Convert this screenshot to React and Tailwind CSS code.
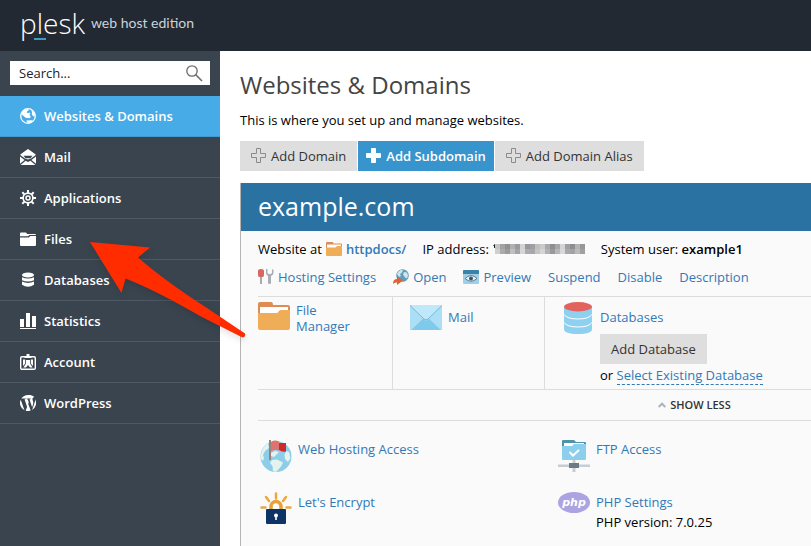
import { useState } from 'react';
import clsx from 'clsx';

const GlobeIcon = () => (
    <svg width="16" height="16" viewBox="0 0 16 16" fill="none">
        <circle cx="8" cy="8" r="7.3" stroke="currentColor" strokeWidth="1.3" />
        <path d="M1 6 2.200 3.600 5 1.600 8 1l.8 1.600-1.600.6-.4 1.600 1.800.2 1-.6.8 1.200-1 1.400 1.400 1.400-1 1.800-4.200-.4-2.600-2.200ZM11.200 1.800l2.600 2.200 1.200 3.400-1.600 1-1.600-2 .2-2.200ZM6.200 12.600l5.400-.4 1.400.4-2.200 2-3 .4Z" fill="currentColor" />
    </svg>
);

const MailIcon = () => (
    <svg width="16" height="16" viewBox="0 0 16 16" fill="currentColor">
        <path d="M8 0 15.500 5.200v1L11 9.600l-3 1-3-1L.5 6.200v-1Z" />
        <path d="M3.500 6.800h9L10.500 9.200h-5Z" fill="#3a444f" />
        <path d="M0 7.500 4.600 11 0 14.800ZM16 7.500 11.400 11 16 14.800ZM.6 16 5.600 11.800 8 13l2.400-1.200 5 4.200Z" />
    </svg>
);

const GearIcon = () => (
    <svg width="16" height="16" viewBox="0 0 16 16" fill="none" stroke="currentColor">
        <circle cx="8" cy="8" r="4.9" strokeWidth="1.7" />
        <circle cx="8" cy="8" r="2" strokeWidth="1.5" />
        <path strokeWidth="2" d="M8 0v3M8 13v3M0 8h3M13 8h3M2.3 2.3l2.1 2.1M11.6 11.6l2.1 2.1M13.7 2.3l-2.1 2.1M4.4 11.6l-2.1 2.1" />
    </svg>
);

const FilesIcon = () => (
    <svg width="16" height="16" viewBox="0 0 16 16" fill="currentColor">
        <path d="M0 2.600Q0 1.600 1 1.600H6L7.200 3H15Q16 3 16 4H9.400L8 5.200H0Z" />
        <path d="M0 6.500H8.800L10.200 5H16V14Q16 15 15 15H1Q0 15 0 14Z" />
    </svg>
);

const StackIcon = () => (
    <svg width="16" height="16" viewBox="0 0 16 16" fill="currentColor">
        <ellipse cx="8" cy="3" rx="6" ry="2.5" />
        <path d="M2 5.200Q8 8 14 5.200V8.200Q8 11 2 8.200ZM2 9.600Q8 12.400 14 9.600V12.800Q8 16.800 2 12.800Z" />
    </svg>
);

const StatsIcon = () => (
    <svg width="16" height="16" viewBox="0 0 16 16" fill="currentColor">
        <path d="M0 6h4v8H0zM6 0h4v14H6zM12 3h4v11h-4zM0 15h16v1H0z" />
    </svg>
);

const AccountIcon = () => (
    <svg width="16" height="16" viewBox="0 0 16 16" fill="none">
        <rect x=".7" y="2.7" width="14.6" height="12.6" rx="1.3" stroke="currentColor" strokeWidth="1.4" />
        <path d="M6.5 0h3v2h2v2h-7V2h2ZM3 5.500h2.200v4L3 12ZM13 5.500h-2.200v4L13 12ZM6 6h4v3.500l2.600 3.900H10L8 11l-2 2.400H3.400L6 9.500Z" fill="currentColor" />
    </svg>
);

const WordPressIcon = () => (
    <svg width="16" height="16" viewBox="0 0 24 24" fill="currentColor">
        <path d="M12 0a12 12 0 0 0-10 5.400h3.500c1.200 0 2.600-.2 2.600-.2.7 0 .8.900.1 1l-1.400.1 4 12.200L13.100 11 11.500 6.300l-1.200-.1c-.6 0-.5-1 .1-1 0 0 1.700.2 2.600.2 1.100 0 2.500-.2 2.500-.2.7 0 .8.900.1 1l-1.400.1 4 12 1.100-3.700c1.700-4.600-.6-6.100-.6-8.200 0-1.900 1.300-3.300 3-3.300A12 12 0 0 0 12 0ZM1.100 7A12 12 0 0 0 6.700 22.800L1.100 7Zm11.100 6L8.600 23.500a12 12 0 0 0 7.500-.2ZM22.600 6.300c.3 2.100-.2 4-.8 5.700l-3.700 10.400A12 12 0 0 0 22.600 6.300Z" />
    </svg>
);

const navItems = [
    { label: 'Websites & Domains', Icon: GlobeIcon },
    { label: 'Mail', Icon: MailIcon },
    { label: 'Applications', Icon: GearIcon },
    { label: 'Files', Icon: FilesIcon },
    { label: 'Databases', Icon: StackIcon },
    { label: 'Statistics', Icon: StatsIcon },
    { label: 'Account', Icon: AccountIcon },
    { label: 'WordPress', Icon: WordPressIcon },
];

const PlusIcon = ({ solid }) => (
    <svg width="16" height="16" viewBox="0 0 16 16" fill={solid ? '#fff' : 'none'} stroke={solid ? '#fff' : '#8b8b8b'}>
        <path d="M5.500.5h4v5h5v4h-5v5h-4v-5h-5v-4h5z" />
    </svg>
);

const FolderIcon = ({ className }) => (
    <svg className={className} viewBox="0 0 32 28">
        <path d="M0 2Q0 0 2 0H13Q15 0 15 3H30Q32 3 32 5V14H0Z" fill="#de8b55" />
        <path d="M2 5H30V14H2Z" fill="#fff" />
        <path d="M0 11H18Q20 11 20.500 9.500T23 8H32V26Q32 28 30 28H2Q0 28 0 26Z" fill="#f0ad58" />
    </svg>
);

const ToolsIcon = () => (
    <svg width="16" height="16" viewBox="0 0 16 16">
        <path d="M0 2Q0 0 3 0t3 2v4q0 2-1.500 2h-3Q0 8 0 6Z" fill="#d8665c" />
        <path d="M2 8h2v7H2z" fill="#a9a9b0" />
        <path d="M8 0v4q0 2 2 3v7q0 1 1.500 1t1.500-1V7q2.500-1 2.500-3V1L14 0v4l-1.500 1h-2L9.500 4V0Z" fill="#a9adb5" />
    </svg>
);

const OpenIcon = () => (
    <svg width="16" height="16" viewBox="0 0 16 16">
        <circle cx="9.500" cy="6.500" r="6.300" fill="#5f9db9" />
        <path d="M5 3 8 .8l2 .8-1 2L7 5l1 2-2 1-2-3ZM11 3l3 .5 1 3-1 3-2-1-2-3Z" fill="#cfe6ef" />
        <path d="M0 15Q0 10 4 10V7l6 4.500L4 16v-2.500Q1.500 13 0 15Z" fill="#e0623a" />
    </svg>
);

const PreviewIcon = () => (
    <svg width="16" height="16" viewBox="0 0 16 16">
        <rect y="1" width="16" height="14" rx="1" fill="#9fcfe6" />
        <path d="M0 2q0-1 1-1h14q1 0 1 1v3H0Z" fill="#3b82a8" />
        <path d="M2 9.500Q8 3.500 14 9.500 8 15 2 9.500Z" fill="#e6f2f7" stroke="#5f8299" />
        <circle cx="8" cy="9.500" r="2" fill="#3d5567" />
    </svg>
);

const EnvelopeIcon = () => (
    <svg width="32" height="25" viewBox="0 0 32 25">
        <rect width="32" height="25" rx="1" fill="#a2dcf5" />
        <path d="M1 25 14 13h4l13 12Z" fill="#7fcaea" />
        <path d="M0 1 13 13 1 25H0ZM32 1 19 13 31 25h1Z" fill="#abdff5" />
        <path d="M0 0h32L18 14.500q-2 1.800-4 0Z" fill="#bfe9fa" />
        <path d="m0 .5 14 13.500q2 1.800 4 0L32 .5" fill="none" stroke="#7db9d4" />
    </svg>
);

const DatabaseIcon = () => (
    <svg width="28" height="32" viewBox="0 0 28 32">
        <path d="M0 4.500h28V27q0 5-14 5T0 27Z" fill="#8ed0ef" />
        <path d="M0 12.500Q3 17 14 17t14-4.500M0 20.500Q3 25 14 25t14-4.500" fill="none" stroke="#fff" />
        <ellipse cx="14" cy="4.700" rx="14" ry="4.700" fill="#e3635c" />
    </svg>
);

const HostingIcon = () => (
    <svg width="32" height="34" viewBox="0 0 32 34">
        <circle cx="16" cy="17.500" r="15.500" fill="#8ecdea" />
        <path d="M8 4 4 8Q0 14 1 20l2 2 1-3-1-3 2-4 4-3ZM11 14l4-2 4 1-3 3-2 2-3-1ZM12 21l5-.5 4 2 2 1-2 4-5 5.500-3-1-.5-5-2.500-3ZM26 12l3 1 1.500 6-2.500 4-3-3-.5-4Z" fill="#e3f3ee" />
        <path d="M11 3q4-2.500 8-.5v9q-4-2-8 1Z" fill="#e07370" />
        <path d="M19 4h7v8.500q-4 1-7-1.500Z" fill="#cc2b2b" />
        <path d="M9 1h2v20H9z" fill="#9a8178" />
    </svg>
);

const EncryptIcon = () => (
    <svg width="32" height="33" viewBox="0 0 32 33" fill="none">
        <path d="M16 1.500v5M6 5l3 4M26 5l-3 4M1.500 15.500h4M26.500 15.500h4" stroke="#eaa83e" strokeWidth="2.500" strokeLinecap="round" />
        <path d="M11 18v-3.500a5 5 0 0 1 10 0V18" stroke="#e5a13a" strokeWidth="3.500" />
        <rect x="6" y="17" width="20" height="15" rx="1" fill="#0e3467" />
        <circle cx="16" cy="23.500" r="2" fill="#fff" />
        <path d="M15.200 24h1.600v4h-1.600z" fill="#fff" />
    </svg>
);

const FtpIcon = () => (
    <svg width="32" height="33" viewBox="0 0 32 33">
        <path d="M4 2q0-1 1-1h11l2 2h9q1 0 1 1v8H4Z" fill="#4d93ac" />
        <path d="M6 4h20v6H6z" fill="#fff" />
        <path d="M4 7h10l2-2h12v15q0 1-1 1H5q-1 0-1-1Z" fill="#8bcfec" />
        <path d="m11.500 13 3.500 3.500L21 11" stroke="#fff" strokeWidth="2" fill="none" />
        <path d="M14.500 21h3v12h-3zM0 25.500h32v2.500H0z" fill="#c6ced3" />
        <rect x="11" y="24" width="10" height="5" fill="#6c7a86" />
    </svg>
);

const PhpIcon = () => (
    <svg width="32" height="21" viewBox="0 0 32 21">
        <ellipse cx="16" cy="10.500" rx="16" ry="10.500" fill="#aca3e2" />
        <text x="16" y="13.500" textAnchor="middle" fill="#fff" fontFamily="DejaVu Sans" fontSize="11" fontStyle="italic" fontWeight="bold">php</text>
    </svg>
);

// hidden IP address, drawn as grey blocks
const mosaic = ['#c4c4c4', '#a2a2a2', '#909094', '#b0b0b0', '#9a9a9e', '#d2d2d2', '#98989a', '#9f9fa3', '#bfbfbf', '#cacaca', '#a8a8a8', '#8e8e92', '#a6a6a6', '#d4d4d4', '#a0a0a4', '#8d8d90', '#b4b4b4', '#979799'];
const HiddenIp = () => (
    <svg width="92" height="12" viewBox="0 0 92 12" role="img" aria-label="hidden">
        <path d="M0 2.500 2 1v4H1V3Z" fill="#222" />
        {mosaic.map((c, i) => (
            <g key={i} fill={c}>
                <rect x={2 + i * 5} y="1" width="5" height="5" />
                <rect x={2 + i * 5} y="6" width="5" height="5" opacity={i % 3 === 0 ? 0.8 : 0.9} />
            </g>
        ))}
    </svg>
);

const Link = ({ className, children }) => (
    <a href="#" className={clsx('text-[#3279b7] hover:underline', className)}>{children}</a>
);

const siteActions = [
    { label: 'Hosting Settings', Icon: ToolsIcon },
    { label: 'Open', Icon: OpenIcon },
    { label: 'Preview', Icon: PreviewIcon },
    { label: 'Suspend' },
    { label: 'Disable' },
    { label: 'Description' },
];

const tools = [
    { label: 'Web Hosting Access', Icon: HostingIcon },
    { label: 'FTP Access', Icon: FtpIcon },
    { label: "Let's Encrypt", Icon: EncryptIcon },
    { label: 'PHP Settings', Icon: PhpIcon, note: 'PHP version: 7.0.25' },
];

export default function App() {
    const [active, setActive] = useState('Websites & Domains');
    const [query, setQuery] = useState('');

    return (
        <div className="relative flex flex-col h-screen overflow-hidden bg-white font-['Open_Sans',sans-serif] text-[13px] leading-5 text-black">
            <header className="flex items-center gap-1.5 h-[51px] shrink-0 pl-5 pb-1.5 bg-[#222933]">
                <span className="relative text-[28px] leading-10 font-light text-white">
                    plesk
                    <span className="absolute left-3.5 bottom-[3px] w-3 h-0.5 bg-[#3b9cc4]" />
                </span>
                <span className="font-[Lato,sans-serif] text-sm text-[#c9d3dc]">web host edition</span>
            </header>

            <div className="flex flex-1 min-h-0">
                {/* Sidebar */}
                <aside className="w-[220px] shrink-0 bg-[#3a444f]">
                    <div className="relative px-2.5 pt-2.5 pb-[11px]">
                        <input
                            type="text"
                            aria-label="Search"
                            placeholder="Search..."
                            value={query}
                            onChange={(e) => setQuery(e.target.value)}
                            className="block w-full h-6 pl-[9px] pr-8 bg-white text-black placeholder:text-[#222] outline-none"
                        />
                        <svg className="absolute right-[17px] top-3.5" width="17" height="17" viewBox="0 0 17 17" fill="none" stroke="#6b6b6b">
                            <circle cx="6" cy="6" r="5.200" strokeWidth="1.300" />
                            <path d="m9.800 9.800 6.200 6.200" strokeWidth="1.600" />
                        </svg>
                    </div>
                    <nav>
                        {navItems.map(({ label, Icon }) => (
                            <a
                                key={label}
                                href="#"
                                onClick={() => setActive(label)}
                                className={clsx(
                                    'flex items-center gap-2 h-[41px] pl-5 border-b font-semibold text-white',
                                    active === label ? 'bg-[#46abe6] border-[#3f9bd0]' : 'border-[#4d5963]'
                                )}
                            >
                                <Icon />
                                {label}
                            </a>
                        ))}
                    </nav>
                </aside>

                {/* Content */}
                <main className="flex flex-col flex-1 min-w-0 pl-5 pt-[18px]">
                    <h1 className="text-2xl leading-8 text-[#444]">Websites &amp; Domains</h1>
                    <p className="mt-[9px]">This is where you set up and manage websites.</p>

                    <div className="flex gap-px mt-[11px] text-[#333]">
                        <button className="flex items-center gap-1 h-[30px] px-[11px] bg-[#dedede]"><PlusIcon />Add Domain</button>
                        <button className="flex items-center gap-1 h-[30px] px-2 bg-[#3894cc] text-white font-semibold"><PlusIcon solid />Add Subdomain</button>
                        <button className="flex items-center gap-1 h-[30px] px-[11px] bg-[#dedede]"><PlusIcon />Add Domain Alias</button>
                    </div>

                    <section className="flex-1 mt-3 border-l border-[#b4b4b4] bg-[#fafafa]">
                        <h2 className="h-12 pl-[17px] text-[25px] leading-[46px] text-white bg-[#2a72a2]">example.com</h2>

                        <div className="pl-[17px]">
                            <div className="flex items-center gap-4 pt-2">
                                <span className="flex items-center gap-1">
                                    Website at
                                    <FolderIcon className="w-4 h-3.5" />
                                    <Link className="font-semibold">httpdocs/</Link>
                                </span>
                                <span className="flex items-center gap-1">IP address: <HiddenIp /></span>
                                <span>System user: <b className="font-semibold">example1</b></span>
                            </div>

                            <div className="flex items-center gap-[17px] mt-2 pb-[9px]">
                                {siteActions.map(({ label, Icon }) => (
                                    <span key={label} className="flex items-center gap-1">
                                        {Icon && <Icon />}
                                        <Link>{label}</Link>
                                    </span>
                                ))}
                            </div>

                            <div className="grid grid-cols-[135px_152px_1fr] h-[94px] border-y border-[#dcdcdc]">
                                <div className="flex items-start gap-1.5 pt-[5px] border-r border-[#dcdcdc]">
                                    <FolderIcon className="w-8 h-7 shrink-0" />
                                    <Link className="w-16 leading-4">File Manager</Link>
                                </div>
                                <div className="flex items-start gap-1.5 pl-[17px] pt-2 border-r border-[#dcdcdc]">
                                    <EnvelopeIcon />
                                    <Link className="pt-0.5">Mail</Link>
                                </div>
                                <div className="flex items-start gap-2 pl-[19px] pt-[5px]">
                                    <DatabaseIcon />
                                    <div className="pt-[5px]">
                                        <Link>Databases</Link>
                                        <button className="block h-[30px] mt-[7px] px-[11px] bg-[#dedede] text-[#333]">Add Database</button>
                                        <div className="mt-px">or <Link className="border-b border-dashed border-[#3279b7]">Select Existing Database</Link></div>
                                    </div>
                                </div>
                            </div>

                            <button className="flex items-center justify-center gap-1 w-full h-[31px] pl-80 border-b border-[#dcdcdc] text-[11px] font-semibold text-[#333]">
                                <svg width="8" height="6" viewBox="0 0 8 6" fill="none" stroke="#a9b4bc" strokeWidth="2"><path d="M.7 5 4 1.700 7.300 5" /></svg>
                                SHOW LESS
                            </button>

                            <div className="grid grid-cols-[298px_1fr] auto-rows-[53px] pl-0.5 pt-[18px]">
                                {tools.map(({ label, Icon, note }) => (
                                    <div key={label} className="flex items-start gap-1.5">
                                        <Icon />
                                        <div>
                                            <Link>{label}</Link>
                                            {note && <div>{note}</div>}
                                        </div>
                                    </div>
                                ))}
                            </div>
                        </div>
                    </section>
                </main>
            </div>

            {/* Pointer to Files */}
            <svg className="absolute left-[86px] top-[238px] drop-shadow-md pointer-events-none" width="164" height="104" viewBox="86 238 164 104">
                <path d="M90 242 150 247.500 138 257.500Q165 281 207 308L245 333.500Q246 337 242.500 337.500L200 316Q155 290 125.500 278.500L121.500 293Z" fill="#ff2c00" />
            </svg>
        </div>
    );
}
